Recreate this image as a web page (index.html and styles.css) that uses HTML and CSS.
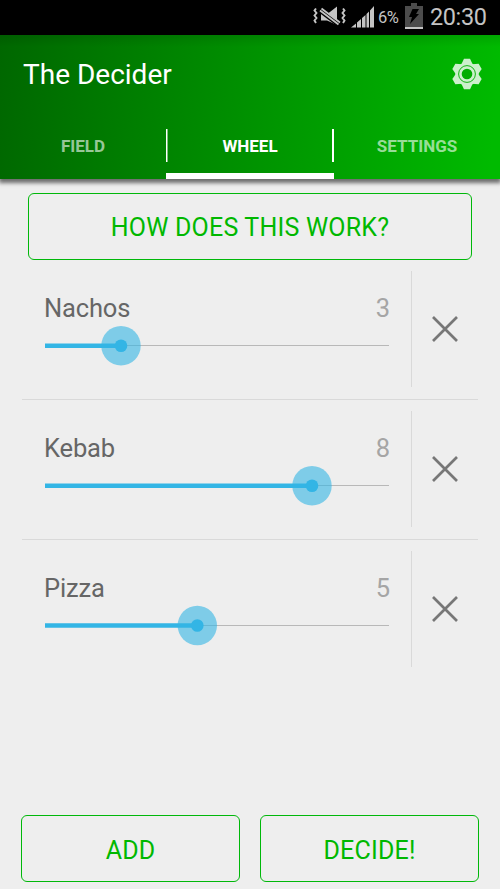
FILE: index.html
```html
<!DOCTYPE html>
<html lang="en">
<head>
<meta charset="utf-8">
<title>The Decider</title>
<link rel="stylesheet" href="styles.css">
</head>
<body>
<div class="status">
  <svg class="mute" width="34" height="22" viewBox="0 0 34 22" fill="none" stroke="#c4c4c4">
    <path d="M8 7.500h7L24 .5V19L14 14.500H8z" fill="#c4c4c4" stroke="none"/>
    <path d="M6 3.500L28 20" stroke="#000" stroke-width="5"/>
    <path d="M7 4.500L25.500 18.500M8.500 2.500L27 16.500" stroke-width="1.800"/>
    <path d="M3 2.500l-1.500 2 2 2.500-2 2.500 2 2.500-2 2.500L3 17M30 2.500l1.500 2-2 2.500 2 2.500-2 2.500 2 2.500-1.500 2.500" stroke-width="1.900"/>
  </svg>
  <svg class="signal" width="24" height="23" viewBox="0 0 24 23" fill="#c4c4c4">
    <path d="M0 22.500L5 18.500V22.500zM6 17.500l4-3.500v8.500H6zM11 13l3.500-3v12.500H11zM15.500 9L18 6.500v16h-2.500zM19 5.500L23 1v21.500h-4z"/>
  </svg>
  <span class="percent">6%</span>
  <svg class="battery" width="18" height="26" viewBox="0 0 18 26">
    <path d="M6 0h6v3h6v23H0V3h6z" fill="#4c4c4c"/>
    <path d="M0 24h18v2H0z" fill="#c4c4c4"/>
    <path d="M7.500 6H14l-3 5h3L5 21l2-7H4z" fill="#000"/>
  </svg>
  <span class="clock">20:30</span>
</div>
<header class="header">
  <div class="bar">
    <h1>The Decider</h1>
    <svg class="gear" width="30" height="32" viewBox="-15 -16 30 32">
      <g fill="#ccf0cc"><circle r="11.500"/>
        <path id="tooth" d="M-6-9L-3-15.200H3L6-9z"/>
        <use href="#tooth" transform="rotate(60)"/><use href="#tooth" transform="rotate(120)"/><use href="#tooth" transform="rotate(180)"/><use href="#tooth" transform="rotate(240)"/><use href="#tooth" transform="rotate(300)"/>
      </g>
      <circle r="8.400" fill="none" stroke="#00ad00" stroke-width=".9"/>
      <circle r="5.300" fill="#00ad00"/>
    </svg>
  </div>
  <nav class="tabs">
    <span class="tab field">FIELD</span>
    <span class="tab wheel">WHEEL</span>
    <span class="tab settings">SETTINGS</span>
  </nav>
</header>
<main>
  <button class="button help"><span>HOW DOES THIS WORK?</span></button>
  <section class="row">
    <div class="option">
      <div class="caption"><span class="nachos">Nachos</span><span class="value">3</span></div>
      <svg class="slider" width="346" height="42" viewBox="0 0 346 42"><path class="track" d="M1 20.500H345"/><path class="fill" d="M1 20.800H77"/><circle class="halo" cx="77" cy="20.800" r="19.700"/><circle class="dot" cx="77" cy="20.800" r="6.300"/></svg>
    </div>
    <div class="remove"><svg width="26" height="26" viewBox="0 0 26 26"><path d="M1 1L25 25M25 1L1 25"/></svg></div>
  </section>
  <section class="row">
    <div class="option">
      <div class="caption"><span class="kebab">Kebab</span><span class="value">8</span></div>
      <svg class="slider" width="346" height="42" viewBox="0 0 346 42"><path class="track" d="M1 20.500H345"/><path class="fill" d="M1 20.800H268"/><circle class="halo" cx="268" cy="20.800" r="19.700"/><circle class="dot" cx="268" cy="20.800" r="6.300"/></svg>
    </div>
    <div class="remove"><svg width="26" height="26" viewBox="0 0 26 26"><path d="M1 1L25 25M25 1L1 25"/></svg></div>
  </section>
  <section class="row">
    <div class="option">
      <div class="caption"><span class="pizza">Pizza</span><span class="value">5</span></div>
      <svg class="slider" width="346" height="42" viewBox="0 0 346 42"><path class="track" d="M1 20.500H345"/><path class="fill" d="M1 20.500H153"/><circle class="halo" cx="153.300" cy="20.500" r="19.700"/><circle class="dot" cx="153.300" cy="20.500" r="6.300"/></svg>
    </div>
    <div class="remove"><svg width="26" height="26" viewBox="0 0 26 26"><path d="M1 1L25 25M25 1L1 25"/></svg></div>
  </section>
</main>
<footer>
  <button class="button"><span>ADD</span></button>
  <button class="button"><span>DECIDE!</span></button>
</footer>
</body>
</html>
```
FILE: styles.css
```css
* { box-sizing: border-box; }
body {
  margin: 0;
  width: 500px;
  height: 889px;
  overflow: hidden;
  display: flex;
  flex-direction: column;
  background: #eee;
  font-family: Roboto, sans-serif;
}
.status {
  height: 35px;
  background: #000;
  color: #c4c4c4;
  display: flex;
  align-items: flex-start;
  padding-left: 313px;
  position: relative;
}
.status > * { flex: none; }
.mute { margin-top: 6px; }
.signal { margin: 5px 0 0 4px; }
.percent { font-size: 16.500px; line-height: 20px; margin: 8px 0 0 3px; width: 27px; letter-spacing: -.4px; }
.battery { margin-top: 3px; }
.clock { font-size: 23.500px; line-height: 28px; margin: 3px 0 0 7px; white-space: nowrap; letter-spacing: -.4px; }
.header {
  height: 144px;
  background: linear-gradient(rgba(0, 0, 0, .1), transparent 12px), linear-gradient(95deg, #006700, #00ba00 98%);
  box-shadow: 0 3px 4px 1px rgba(0, 0, 0, .55);
  color: #fff;
  display: flex;
  flex-direction: column;
}
.bar {
  height: 78px;
  padding: 0 18px 0 23px;
  display: flex;
  align-items: center;
  justify-content: space-between;
}
h1 { margin: 2px 0 0; font-size: 28px; font-weight: 400; line-height: 34px; }
.tabs { height: 66px; display: grid; grid-template-columns: 166px 168px 166px; }
.tab {
  display: flex;
  justify-content: center;
  padding-top: 23px;
  font-size: 17px;
  font-weight: 700;
  line-height: 20px;
  color: rgba(255, 255, 255, .6);
}
.wheel {
  color: #fff;
  border-bottom: 6px solid #fff;
  background: linear-gradient(#fff, #fff) 0 16px / 1.500px 33px no-repeat, linear-gradient(#fff, #fff) 100% 16px / 2px 33px no-repeat;
}
main { padding: 14px 22px 0; flex: 1; }
.button {
  height: 67px;
  border: 1px solid #00b80a;
  border-radius: 6px;
  background: none;
  color: #00b800;
  font: 400 25px/30px Roboto, sans-serif;
  letter-spacing: .2px;
  padding: 2px 0 0;
}
.help { display: block; width: 444px; margin: 0 6px; }
.row {
  height: 140px;
  border-bottom: 1px solid #d9d9d9;
  padding: 11px 0 12px;
  display: flex;
}
.row:last-child { border: 0; padding-bottom: 13px; }
.option { width: 389px; padding: 21px 21px 0 22px; }
.caption {
  display: flex;
  justify-content: space-between;
  font-size: 25.500px;
  line-height: 32px;
  color: #666;
  letter-spacing: -.15px;
}
.value { color: #a5a5a5; }
.slider { display: block; margin-top: 1px; }
.track { stroke: #b8b8b8; stroke-width: 1; }
.fill { stroke: #33b5e5; stroke-width: 4.500; }
.halo { fill: #33b5e5; fill-opacity: .6; }
.dot { fill: #33b5e5; }
.remove {
  width: 67px;
  border-left: 1px solid #d9d9d9;
  display: flex;
  align-items: center;
  justify-content: center;
}
.remove path { stroke: #777; stroke-width: 2.700; }
footer { display: flex; gap: 20px; padding: 0 21px 7px; }
footer .button { flex: 1; padding-top: 4px; }
```
